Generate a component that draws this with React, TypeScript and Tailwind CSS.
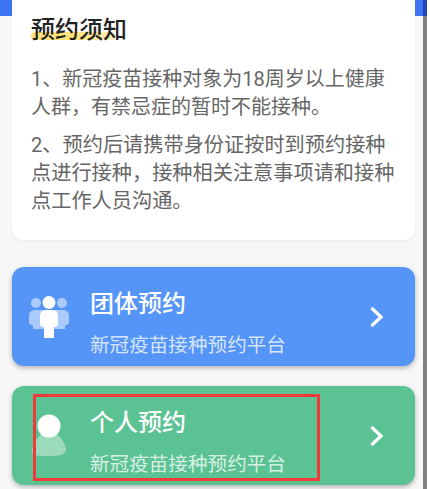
import React from 'react';

const cjk = "font-['Roboto','Noto_Sans_CJK_SC',sans-serif]";

function Chevron() {
  return (
    <svg width="14" height="22" viewBox="0 0 14 22" fill="none" className="shrink-0">
      <path d="M1.5 2 L11 11 L1.5 20" stroke="#fff" strokeWidth="3.2" />
    </svg>
  );
}

function GroupIcon() {
  return (
    <svg width="40" height="42" viewBox="0 0 40 42" className="shrink-0">
      <circle cx="7" cy="7" r="5" fill="#fff" fillOpacity="0.5" />
      <circle cx="33" cy="7" r="5" fill="#fff" fillOpacity="0.5" />
      <path d="M0 20 Q0 14 6 14 L34 14 Q40 14 40 20 L40 26 Q40 29 36 29.500 L36 33 L4 33 L4 29.500 Q0 29 0 26 Z" fill="#fff" fillOpacity="0.5" />
      <circle cx="20" cy="6.500" r="6.500" fill="#fff" />
      <path d="M11 20 Q11 14 17 14 L23 14 Q29 14 29 20 L29 28 Q29 31 25 31 L25 42 L15 42 L15 31 Q11 31 11 28 Z" fill="#fff" />
    </svg>
  );
}

function PersonIcon() {
  return (
    <svg width="40" height="44" viewBox="0 0 40 44" className="shrink-0">
      <path d="M3 38 C3 30 10 18 20 18 C30 18 37 30 37 36 C37 41 30 42 20 42 C10 42 3 42 3 38 Z" fill="#fff" fillOpacity="0.4" />
      <circle cx="20" cy="12" r="11.500" fill="#fff" />
    </svg>
  );
}

function EntryCard({ title, color, icon }: { title: string; color: string; icon: React.ReactNode }) {
  return (
    <div className={`flex h-[99px] items-center rounded-xl pl-[17px] pr-[31px] shadow-[0_2px_5px_rgba(0,0,0,0.28)] ${color}`}>
      <div className="flex w-[61px] items-center">{icon}</div>
      <div className="flex-1 pt-[14px] text-white">
        <div className="text-[24px] leading-[34px] font-medium">{title}</div>
        <div className="mt-[11px] text-[19.6px] leading-[28px] opacity-75">新冠疫苗接种预约平台</div>
      </div>
      <Chevron />
    </div>
  );
}

export default function App() {
  return (
    <div className={`relative flex h-[489px] w-[430px] overflow-hidden bg-white ${cjk}`}>
      <div className="relative w-[423px] shrink-0 overflow-hidden bg-[#f7f7f7] px-3">
        {/* blue header peeking out behind the notice card */}
        <div className="absolute top-0 left-0 h-4 w-full bg-[#3b74f0]" />

        <div className="relative h-[240px] w-[403px] rounded-b-xl bg-white px-[19px] pt-[13px] shadow-[0_1px_3px_rgba(0,0,0,0.05)]">
          <div className="relative h-[34px] w-fit text-[24px] leading-[34px] font-medium text-[#222]">
            <div className="absolute top-[19px] left-0 h-[8px] w-[84px] rounded-full bg-gradient-to-r from-[#ffe27a] via-[#ffe27a] to-[#ffe27a]/50" />
            <span className="relative">预约须知</span>
          </div>
          <div className="mt-[18px] w-[368px] leading-[28px] text-[#666]">
            <p className="text-[20px]">1、新冠疫苗接种对象为18周岁以上健康人群，有禁忌症的暂时不能接种。</p>
            <p className="mt-[10px] text-[20.2px]">2、预约后请携带身份证按时到预约接种点进行接种，接种相关注意事项请和接种点工作人员沟通。</p>
          </div>
        </div>

        <div className="mt-[27px] flex w-[403px] flex-col gap-[20px]">
          <EntryCard title="团体预约" color="bg-[#5595f7]" icon={<GroupIcon />} />
          <EntryCard title="个人预约" color="bg-[#5bc293]" icon={<PersonIcon />} />
        </div>

        {/* red annotation box */}
        <div className="absolute top-[394px] left-[33px] h-[87px] w-[287px] border-[3px] border-[#f23a3a]" />
      </div>
      {/* scrollbar line, darker where it crosses the blue header */}
      <div className="w-[4px] shrink-0 bg-[#808080]">
        <div className="h-4 bg-[#1f45b5]" />
      </div>
    </div>
  );
}
